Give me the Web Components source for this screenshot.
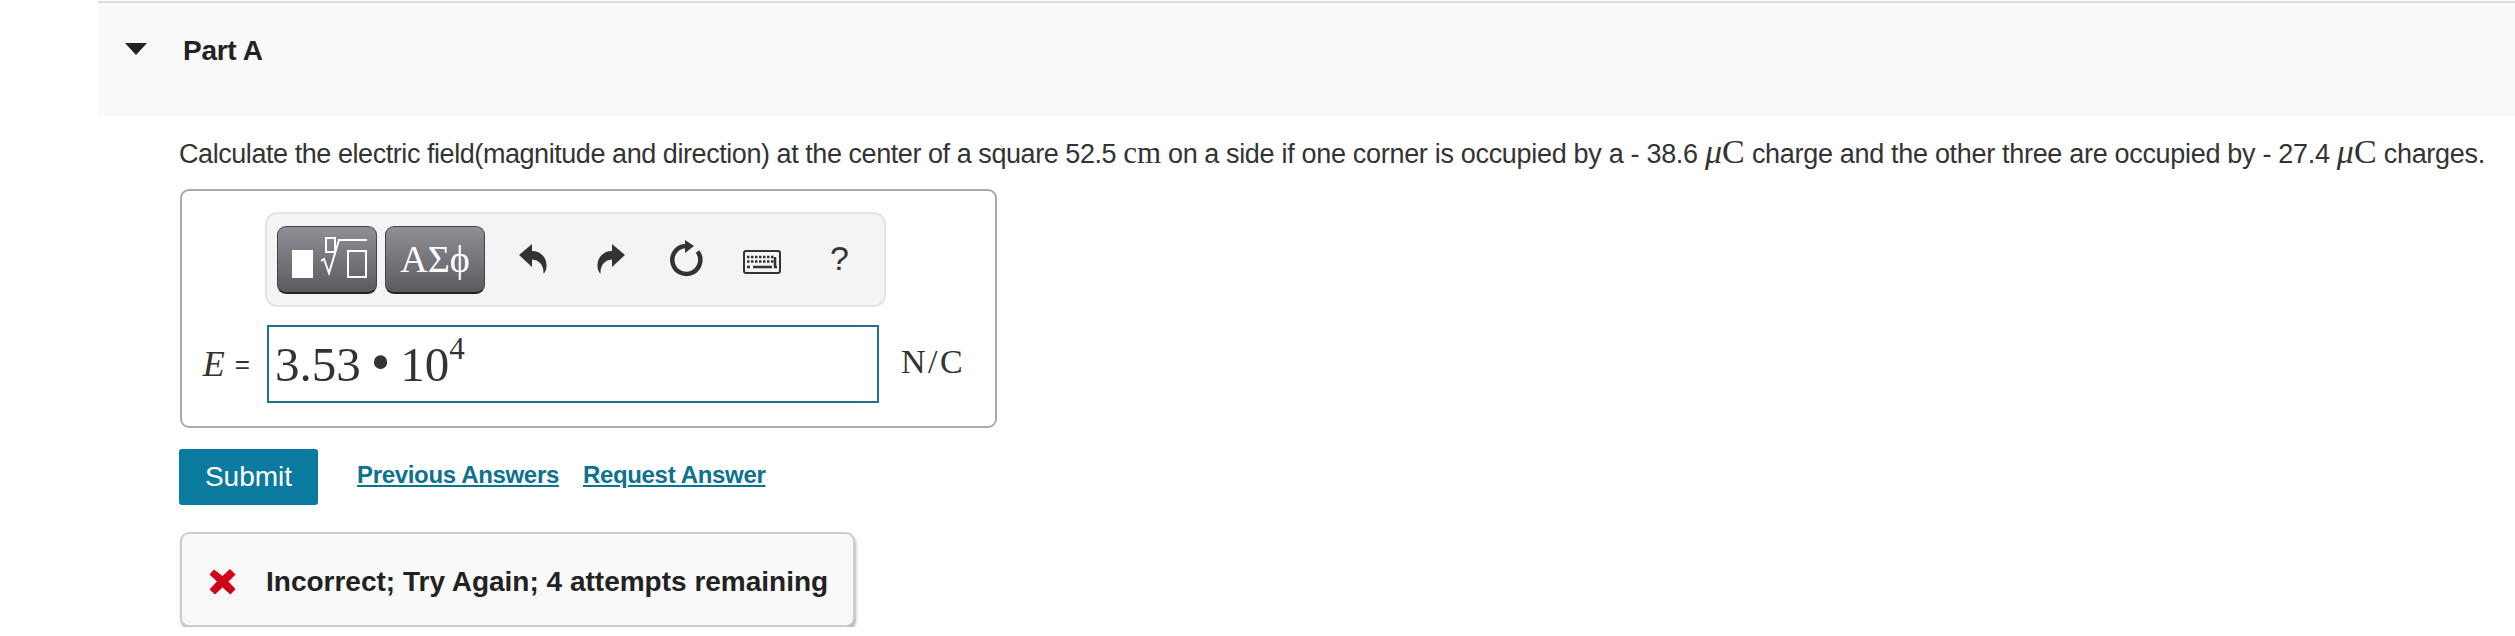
<!DOCTYPE html>
<html>
<head>
<meta charset="utf-8">
<title>Part A</title>
<style>
	body {
		margin: 0;
		background: #fff;
		font-family: "Liberation Sans", Arial, sans-serif;
		color: #333;
	}
</style>
</head>
<body>

<part-section label="Part A">
	<question-text></question-text>
	<math-panel></math-panel>
	<action-row></action-row>
	<feedback-box>Incorrect; Try Again; 4 attempts remaining</feedback-box>
</part-section>

<script>
class PartSection extends HTMLElement {

	constructor() {

		super();

		this.attachShadow({ mode: 'open' });
		this.shadowRoot.innerHTML = `
			<style>
				:host {
					display: block;
					padding-left: 98px;
				}

				.head {
					display: flex;
					align-items: flex-start;
					height: 113px;
					margin-top: 1px;
					border-top: 2px solid #ddd;
					background: #f9f9f9;
				}

				.arrow {
					width: 0;
					height: 0;
					margin: 40px 36px 0 27px;
					border-left: 11px solid transparent;
					border-right: 11px solid transparent;
					border-top: 12px solid #222;
				}

				h2 {
					margin: 30px 0 0;
					font: bold 28px/36px "Liberation Sans", Arial, sans-serif;
					letter-spacing: -0.3px;
					color: #222;
				}

				.body {
					padding-left: 81px;
				}
			</style>
			<div class="head">
				<div class="arrow"></div>
				<h2>${this.getAttribute('label')}</h2>
			</div>
			<div class="body"><slot></slot></div>
		`;

	}

}

class QuestionText extends HTMLElement {

	constructor() {

		super();

		this.attachShadow({ mode: 'open' });
		this.shadowRoot.innerHTML = `
			<style>
				:host {
					display: block;
					margin-top: 20px;
					font-size: 27px;
					line-height: 36px;
					letter-spacing: -0.44px;
					color: #333;
					white-space: nowrap;
				}

				.rest {
					letter-spacing: -0.31px;
				}

				.m {
					font-family: "Liberation Serif", serif;
					font-size: 31px;
					line-height: 0;
					letter-spacing: 0;
				}

				.u {
					font-size: 34px;
				}

				i {
					font-family: "Liberation Serif", serif;
				}
			</style>
			Calculate the electric field(magnitude and direction) at the center of a square 52.5 <span class="m">cm</span> on a <span class="rest">side if one corner is occupied by a - 38.6 <span class="m u"><i>μ</i>C</span> charge and the other three are occupied by - 27.4 <span class="m u"><i>μ</i>C</span> charges.</span>
		`;

	}

}

class MathToolbar extends HTMLElement {

	constructor() {

		super();

		this.attachShadow({ mode: 'open' });
		this.shadowRoot.innerHTML = `
			<style>
				:host {
					display: flex;
					align-items: center;
					box-sizing: border-box;
					width: 621px;
					height: 95px;
					padding-left: 10px;
					border: 2px solid #e4e4e4;
					border-radius: 12px;
					background: #f4f4f4;
				}

				.btn {
					display: flex;
					align-items: center;
					justify-content: center;
					box-sizing: border-box;
					width: 100px;
					height: 68px;
					margin-right: 8px;
					border: 1px solid #444;
					border-bottom: 2px solid #222;
					border-radius: 9px;
					background: linear-gradient(#8f8f96, #5b5b5f);
					color: #fff;
					font: 38px "Liberation Serif", serif;
				}

				svg {
					display: block;
					flex: none;
				}

				.root { margin-left: 5px; }
				.undo { margin-left: 26px; margin-top: -2px; }
				.redo { margin-left: 50px; margin-top: -2px; }
				.reload { margin-left: 45px; margin-top: -2px; }
				.keys { margin-left: 40px; margin-top: 5px; }

				.help {
					margin-left: 49px;
					margin-top: -3px;
					font-size: 34px;
					color: #333;
				}
			</style>
			<div class="btn">
				<svg class="root" width="76" height="44" viewBox="0 0 76 44" fill="none" stroke="#fff" stroke-width="2">
					<rect x="0" y="13" width="21" height="28" fill="#fff" stroke="none"/>
					<rect x="34" y="1" width="9" height="14"/>
					<path d="M29 24l3-2 5 14 10-33h28"/>
					<rect x="56" y="14" width="18" height="26"/>
				</svg>
			</div>
			<div class="btn">ΑΣϕ</div>
			<svg class="undo" width="28" height="30" viewBox="0 0 28 30" fill="#333">
				<path d="M0 11L13 0v7C22 7 28 14 27.500 22c0 3-1 6-3 8 .5-7-3-14-11.500-14.500V23z"/>
			</svg>
			<svg class="redo" width="28" height="30" viewBox="0 0 28 30" fill="#333">
				<path transform="translate(28 0) scale(-1 1)" d="M0 11L13 0v7C22 7 28 14 27.500 22c0 3-1 6-3 8 .5-7-3-14-11.500-14.500V23z"/>
			</svg>
			<svg class="reload" width="33" height="37" viewBox="0 0 33 37" fill="none">
				<path d="M27.500 11.500A14 14 0 1 1 15 6" stroke="#333" stroke-width="4.500"/>
				<path d="M15 0l9 6-9 7z" fill="#333"/>
			</svg>
			<svg class="keys" width="38" height="24" viewBox="0 0 38 24" fill="none">
				<rect x="1" y="1" width="36" height="22" rx="2" stroke="#333" stroke-width="2" fill="#f4f4f4"/>
				<path d="M4 7h28M4 11.500h28" stroke="#333" stroke-width="2.500" stroke-dasharray="2.500 1.500"/>
				<path d="M4 17h3M10 17h19M31 17h3M32 7v10" stroke="#333" stroke-width="2.500"/>
			</svg>
			<div class="help">?</div>
		`;

	}

}

class MathPanel extends HTMLElement {

	constructor() {

		super();

		this.attachShadow({ mode: 'open' });
		this.shadowRoot.innerHTML = `
			<style>
				:host {
					display: grid;
					grid-template-columns: 83px 614px auto;
					align-content: start;
					box-sizing: border-box;
					width: 817px;
					height: 239px;
					margin: 17px 0 0 1px;
					padding-top: 21px;
					border: 2px solid #aaa;
					border-radius: 9px;
				}

				math-toolbar {
					grid-column: 2 / 4;
				}

				.label {
					display: flex;
					align-items: center;
					justify-content: flex-end;
					gap: 10px;
					margin-top: 18px;
					padding-right: 15px;
				}

				.label i {
					font: italic 36px "Liberation Serif", serif;
				}

				.label span {
					font-size: 26px;
				}

				.input {
					display: flex;
					align-items: baseline;
					box-sizing: border-box;
					height: 78px;
					margin: 18px 0 0 2px;
					padding-left: 6px;
					border: 2px solid #23708a;
					font: 49px/70px "Liberation Serif", serif;
					color: #333;
				}

				.input .dot {
					margin: 0 10px;
					font-size: 56px;
				}

				.input sup {
					font-size: 31px;
					line-height: 0;
					position: relative;
					top: -22px;
					vertical-align: baseline;
				}

				.unit {
					margin: 16px 0 0 22px;
					font: 34px/78px "Liberation Serif", serif;
					letter-spacing: 2.500px;
					color: #333;
				}
			</style>
			<math-toolbar></math-toolbar>
			<div class="label"><i>E</i><span>=</span></div>
			<div class="input"><span>3.53</span><span class="dot">•</span><span>10<sup>4</sup></span></div>
			<div class="unit">N/C</div>
		`;

	}

}

class ActionRow extends HTMLElement {

	constructor() {

		super();

		this.attachShadow({ mode: 'open' });
		this.shadowRoot.innerHTML = `
			<style>
				:host {
					display: flex;
					align-items: flex-start;
					margin-top: 21px;
				}

				button {
					width: 139px;
					height: 56px;
					margin-right: 39px;
					padding: 0;
					border: 0;
					border-radius: 3px;
					background: #0b7a9f;
					color: #fff;
					font: 28px "Liberation Sans", Arial, sans-serif;
				}

				a {
					margin: 10px 24px 0 0;
					color: #0b7290;
					font: bold 24px/32px "Liberation Sans", Arial, sans-serif;
					letter-spacing: -0.33px;
					text-decoration: underline;
				}
			</style>
			<button>Submit</button>
			<a href="#">Previous Answers</a>
			<a href="#">Request Answer</a>
		`;

	}

}

class FeedbackBox extends HTMLElement {

	constructor() {

		super();

		this.attachShadow({ mode: 'open' });
		this.shadowRoot.innerHTML = `
			<style>
				:host {
					display: flex;
					align-items: center;
					box-sizing: border-box;
					width: 675px;
					height: 95px;
					margin-top: 27px;
					margin-left: 1px;
					padding: 4px 0 0 27px;
					border: 2px solid #ccc;
					border-radius: 9px;
					background: #f9f9f9;
					box-shadow: 1px 3px 3px rgba(0,0,0,0.3);
					color: #222;
					font: bold 28px "Liberation Sans", Arial, sans-serif;
					white-space: nowrap;
				}

				svg {
					flex: none;
					margin-right: 30px;
				}
			</style>
			<svg width="27" height="27" viewBox="0 0 27 27">
				<path d="M5 2L13.500 8.500 21 1.500 26 6.500 19 13.500 26 21 21.500 26 13.500 19 6 26 1 21.500 8.500 13.500 1 6.500z" fill="#d0021b" stroke="#d0021b" stroke-linejoin="round"/>
			</svg>
			<span><slot></slot></span>
		`;

	}

}

customElements.define('part-section', PartSection);
customElements.define('question-text', QuestionText);
customElements.define('math-toolbar', MathToolbar);
customElements.define('math-panel', MathPanel);
customElements.define('action-row', ActionRow);
customElements.define('feedback-box', FeedbackBox);
</script>
</body>
</html>
